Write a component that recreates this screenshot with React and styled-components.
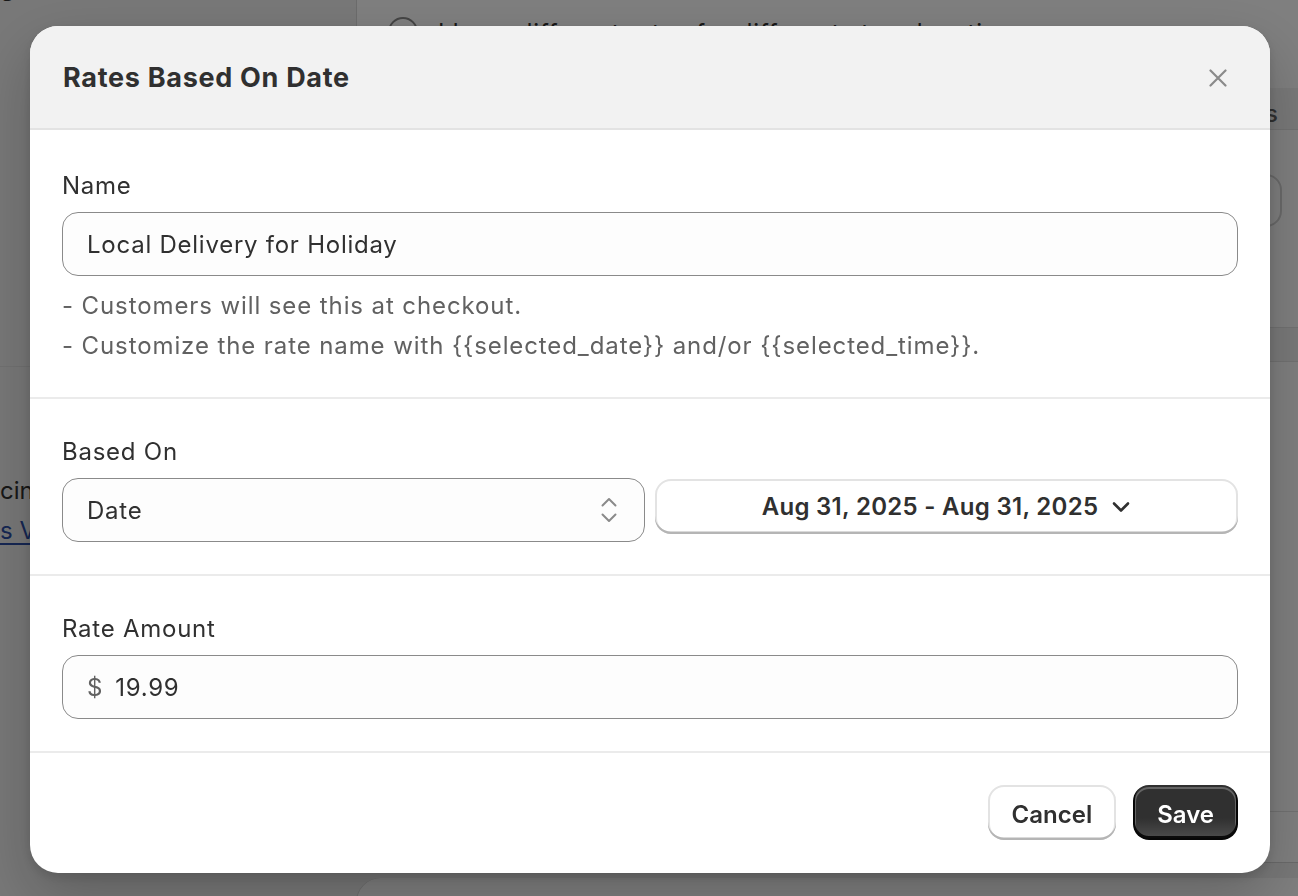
import styled, { createGlobalStyle } from 'styled-components'

const GlobalStyle = createGlobalStyle`
  html, body {
    margin: 0;
    padding: 0;
    height: 100%;
    overflow: hidden;
    background: #f1f1f1;
    font-family: Inter, "Open Sans", "Liberation Sans", sans-serif;
    color: #303030;
  }
  * { box-sizing: border-box; }
`

const ChevronUpDown = () => (
  <svg width="20" height="28" viewBox="0 0 20 28" fill="none">
    <path d="M3.5 9.5L10 3l6.5 6.5" stroke="#8a8a8a" strokeWidth="2" strokeLinecap="round" strokeLinejoin="round" />
    <path d="M3.5 18.5L10 25l6.5-6.5" stroke="#8a8a8a" strokeWidth="2" strokeLinecap="round" strokeLinejoin="round" />
  </svg>
)

const ChevronDown = () => (
  <svg width="20" height="12" viewBox="0 0 20 12" fill="none">
    <path d="M3 2.5l7 7 7-7" stroke="#303030" strokeWidth="2.6" strokeLinecap="round" strokeLinejoin="round" />
  </svg>
)

const CloseIcon = () => (
  <svg width="24" height="24" viewBox="0 0 24 24" fill="none">
    <path d="M4.5 4.5l15 15M19.5 4.5l-15 15" stroke="#8a8a8a" strokeWidth="2.2" strokeLinecap="round" />
  </svg>
)

const App = () => {
  return (
    <>
      <GlobalStyle />
      <Page>
        {/* page behind the dialog */}
        <LeftColumn>
          <Fragment $top>gs</Fragment>
          <LeftDivider />
          <Fragment>cing</Fragment>
          <LeftLink>s Vary</LeftLink>
        </LeftColumn>

        <RightColumn>
          <Card>
            <RadioRow>
              <Radio />
              <span>I have different rates for different store locations</span>
            </RadioRow>
            <TableHead>
              <span>Conditions</span>
              <span>Rates</span>
            </TableHead>
            <TableRow>
              <GhostButton>Add rates</GhostButton>
            </TableRow>
            <SubHead />
            <TableSpacer />
          </Card>
          <Card $bottom />
        </RightColumn>
      </Page>

      <Overlay>
        <Modal>
          <ModalHeader>
            <Title>Rates Based On Date</Title>
            <CloseButton aria-label="Close">
              <CloseIcon />
            </CloseButton>
          </ModalHeader>

          <Section $first>
            <Label>Name</Label>
            <TextField>
              <span>Local Delivery for Holiday</span>
            </TextField>
            <HelpText>
              <div>- Customers will see this at checkout.</div>
              <div>- Customize the rate name with {'{{selected_date}}'} and/or {'{{selected_time}}'}.</div>
            </HelpText>
          </Section>

          <Section>
            <Label>Based On</Label>
            <SplitRow>
              <SelectField>
                <span>Date</span>
                <ChevronUpDown />
              </SelectField>
              <DateButton>
                Aug 31, 2025 - Aug 31, 2025
                <ChevronDown />
              </DateButton>
            </SplitRow>
          </Section>

          <Section>
            <Label>Rate Amount</Label>
            <TextField>
              <Prefix>$</Prefix>
              <span>19.99</span>
            </TextField>
          </Section>

          <Footer>
            <Button>Cancel</Button>
            <Button $primary>Save</Button>
          </Footer>
        </Modal>
      </Overlay>
    </>
  )
}

export default App

const Page = styled.div`
  display: grid;
  grid-template-columns: 356px 1fr;
  height: 100vh;
  overflow: hidden;
  background: #f1f1f1;
`

const LeftColumn = styled.div`
  display: flex;
  flex-direction: column;
  font-size: 24px;
  line-height: 40px;
  color: #303030;
  white-space: nowrap;
  overflow: hidden;
`

const Fragment = styled.div`
  margin-top: ${p => (p.$top ? '-32px' : '104px')};
`

const LeftDivider = styled.div`
  height: 1px;
  background: #e3e3e3;
  margin-top: 358px;
`

const LeftLink = styled.div`
  color: #2c4ea8;
  text-decoration: underline;
  text-underline-offset: 4px;
`

const RightColumn = styled.div`
  display: flex;
  flex-direction: column;
  gap: 16px;
  margin-top: -40px;
`

const Card = styled.div`
  background: #ffffff;
  border-radius: 24px 0 0 24px;
  box-shadow: 0 1px 0 #d4d4d4, inset 1px 0 0 #d9d9d9;
  height: ${p => (p.$bottom ? '120px' : '902px')};
  display: flex;
  flex-direction: column;
`

const RadioRow = styled.div`
  display: flex;
  align-items: center;
  gap: 20px;
  padding: 48px 32px 0;
  font-size: 24px;
  letter-spacing: 0.8px;
  color: #303030;
  height: 96px;
`

const Radio = styled.span`
  width: 30px;
  height: 30px;
  border-radius: 50%;
  border: 2px solid #8a8a8a;
  flex-shrink: 0;
`

const TableHead = styled.div`
  margin-top: 32px;
  height: 42px;
  background: #f3f3f3;
  display: flex;
  justify-content: space-between;
  align-items: center;
  padding: 10px 20px 0 32px;
  font-size: 24px;
  font-weight: 500;
  color: #616161;
  border-bottom: 1px solid #e3e3e3;
`

const TableRow = styled.div`
  display: flex;
  justify-content: flex-end;
  padding: 44px 16px 0;
  height: 198px;
  border-bottom: 1px solid #e3e3e3;
`

const GhostButton = styled.div`
  height: 53px;
  padding: 0 24px;
  display: flex;
  align-items: center;
  border: 2px solid #d4d4d4;
  border-radius: 16px;
  font-size: 24px;
  font-weight: 600;
`

const SubHead = styled.div`
  height: 34px;
  background: #f3f3f3;
  border-bottom: 1px solid #e3e3e3;
`

const TableSpacer = styled.div`
  height: 450px;
  border-bottom: 1px solid #e3e3e3;
`

const Overlay = styled.div`
  position: fixed;
  inset: 0;
  background: rgba(0, 0, 0, 0.5);
  display: flex;
  align-items: flex-start;
  padding: 26px 28px 0 30px;
`

const Modal = styled.div`
  width: 100%;
  background: #ffffff;
  border-radius: 28px;
  overflow: hidden;
  box-shadow: 0 24px 60px rgba(0, 0, 0, 0.22), 0 4px 12px rgba(0, 0, 0, 0.12);
  display: flex;
  flex-direction: column;
`

const ModalHeader = styled.div`
  height: 104px;
  background: #f2f2f2;
  border-bottom: 2px solid #e3e3e3;
  display: flex;
  align-items: center;
  justify-content: space-between;
  padding: 2px 40px 0 33px;
`

const Title = styled.h2`
  margin: 0;
  font-size: 27px;
  line-height: 32px;
  font-weight: 650;
  color: #303030;
  letter-spacing: 0.7px;
`

const CloseButton = styled.button`
  border: none;
  background: none;
  padding: 0;
  display: flex;
  cursor: pointer;
`

const Section = styled.div`
  padding: ${p => (p.$first ? '40px 32px 31px' : '37px 32px 32px')};
  border-bottom: 2px solid #ebebeb;
`

const Label = styled.div`
  font-size: 24px;
  line-height: 32px;
  letter-spacing: 0.75px;
  color: #303030;
  margin-bottom: 10px;
`

const TextField = styled.div`
  height: 64px;
  border: 1.5px solid #8a8a8a;
  border-radius: 16px;
  background: #fdfdfd;
  display: flex;
  align-items: center;
  gap: 12px;
  padding: 0 24px;
  font-size: 24px;
  letter-spacing: 0.75px;
  color: #303030;
`

const Prefix = styled.span`
  color: #616161;
`

const HelpText = styled.div`
  margin-top: 10px;
  font-size: 24px;
  line-height: 40px;
  letter-spacing: 0.9px;
  color: #616161;
`

const SplitRow = styled.div`
  display: grid;
  grid-template-columns: 1fr 1fr;
  gap: 10px;
  align-items: start;
`

const SelectField = styled(TextField)`
  justify-content: space-between;
  padding-right: 25px;
`

const DateButton = styled.button`
  height: 55px;
  margin-top: 1px;
  border: none;
  border-radius: 16px;
  background: #ffffff;
  box-shadow: inset 0 -2.5px 0 #b5b5b5, inset 0 0 0 2px #e3e3e3;
  display: flex;
  align-items: center;
  justify-content: center;
  gap: 13px;
  padding: 0;
  font-family: inherit;
  font-size: 24px;
  font-weight: 580;
  letter-spacing: 0.3px;
  color: #303030;
`

const Footer = styled.div`
  display: flex;
  justify-content: flex-end;
  gap: 17px;
  padding: 32px 32px 33px;
`

const Button = styled.button`
  height: 55px;
  padding: 3px 24px 0;
  border: none;
  border-radius: 16px;
  font-family: inherit;
  font-size: 24px;
  font-weight: 600;
  cursor: pointer;
  color: ${p => (p.$primary ? '#ffffff' : '#303030')};
  background: ${p =>
    p.$primary
      ? 'linear-gradient(180deg, rgba(48,48,48,0) 60%, rgba(255,255,255,0.15) 100%), #303030'
      : '#ffffff'};
  box-shadow: ${p =>
    p.$primary
      ? 'inset 0 -2px 0 2px rgba(0,0,0,0.85), inset 0 0 0 2px #303030, inset 0 1px 0 3px rgba(255,255,255,0.25)'
      : 'inset 0 -2.5px 0 #b5b5b5, inset 0 0 0 2px #e3e3e3'};
`
